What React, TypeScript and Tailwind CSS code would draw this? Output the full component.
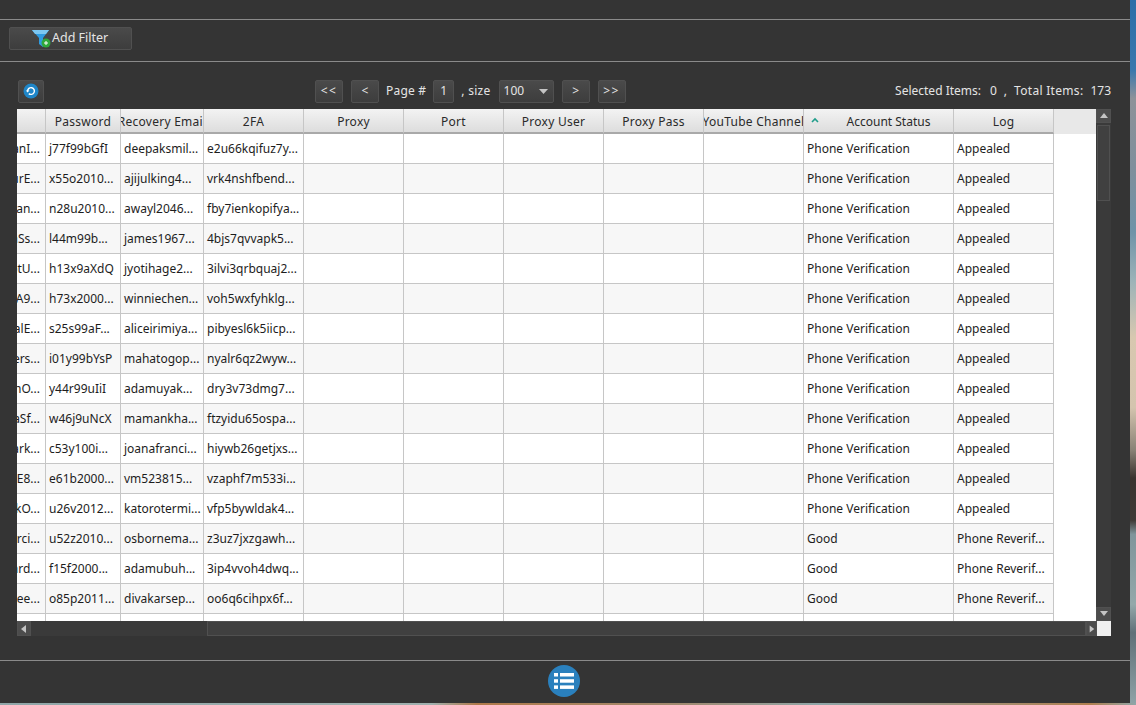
import React from "react";

const rows: string[][] = [
  ["anI...", "j77f99bGfI", "deepaksmil...", "e2u66kqifuz7y...", "Phone Verification", "Appealed"],
  ["urE...", "x55o2010...", "ajijulking4...", "vrk4nshfbend...", "Phone Verification", "Appealed"],
  ["lan...", "n28u2010...", "awayl2046...", "fby7ienkopifya...", "Phone Verification", "Appealed"],
  ["aSs...", "l44m99b...", "james1967...", "4bjs7qvvapk5...", "Phone Verification", "Appealed"],
  ["otU...", "h13x9aXdQ", "jyotihage2...", "3ilvi3qrbquaj2...", "Phone Verification", "Appealed"],
  ["aA9...", "h73x2000...", "winniechen...", "voh5wxfyhklg...", "Phone Verification", "Appealed"],
  ["alE...", "s25s99aF...", "aliceirimiya...", "pibyesl6k5iicp...", "Phone Verification", "Appealed"],
  ["ers...", "i01y99bYsP", "mahatogop...", "nyalr6qz2wyw...", "Phone Verification", "Appealed"],
  ["hO...", "y44r99uIiI", "adamuyak...", "dry3v73dmg7...", "Phone Verification", "Appealed"],
  ["aSf...", "w46j9uNcX", "mamankha...", "ftzyidu65ospa...", "Phone Verification", "Appealed"],
  ["ark...", "c53y100i...", "joanafranci...", "hiywb26getjxs...", "Phone Verification", "Appealed"],
  ["aE8...", "e61b2000...", "vm523815...", "vzaphf7m533i...", "Phone Verification", "Appealed"],
  ["kO...", "u26v2012...", "katorotermi...", "vfp5bywldak4...", "Phone Verification", "Appealed"],
  ["arci...", "u52z2010...", "osbornema...", "z3uz7jxzgawh...", "Good", "Phone Reverif..."],
  ["ard...", "f15f2000...", "adamubuh...", "3ip4vvoh4dwq...", "Good", "Phone Reverif..."],
  ["lee...", "o85p2011...", "divakarsep...", "oo6q6cihpx6f...", "Good", "Phone Reverif..."],
  ["", "", "", "", "", ""],
];

const headers = ["", "Password", "Recovery Email", "2FA", "Proxy", "Port", "Proxy User", "Proxy Pass", "YouTube Channel", "Account Status", "Log"];
const widths = ["w-[29px]", "w-[75px]", "w-[83px]", "w-[100px]", "w-[100px]", "w-[100px]", "w-[100px]", "w-[100px]", "w-[100px]", "w-[150px]", "w-[100px]"];

function Btn({ children, className = "" }: { children: React.ReactNode; className?: string }) {
  return (
    <div className={`flex h-[23px] shrink-0 items-center rounded-[2px] border border-[#505050] bg-gradient-to-b from-[#4a4a4a] to-[#3d3d3d] text-[#e4e4e4] ${className}`}>
      {children}
    </div>
  );
}

function Cell({ w, children, first }: { w: string; children?: React.ReactNode; first?: boolean }) {
  return (
    <div className={`${w} flex h-full shrink-0 items-center overflow-hidden whitespace-nowrap border-r border-[#c6c6c6] ${first ? "justify-end pr-[5px]" : "pl-[3px]"}`}>
      {children}
    </div>
  );
}

function Tri({ dir }: { dir: "up" | "down" | "left" | "right" }) {
  const pts = { up: "1,7 9,7 5,2", down: "1,2 9,2 5,7", left: "7,1 7,9 2,5", right: "3,1 3,9 8,5" }[dir];
  return (
    <svg width="10" height="10" viewBox="0 0 10 10">
      <polygon points={pts} fill="#c4c4c4" />
    </svg>
  );
}

export default function App() {
  return (
    <div className="flex h-[705px] w-[1136px] flex-col overflow-hidden bg-[linear-gradient(90deg,#8fa6a8_0%,#9fb0ae_38%,#b07a4a_42%,#a08a70_60%,#8fa6a8_72%,#b08050_96%,#8fa6a8_100%)] font-['Noto_Sans',sans-serif] text-[12px]">
      <div className="flex h-[703px] shrink-0">
        <div className="flex w-[1130px] shrink-0 flex-col bg-[#343434]">
          <div className="h-[20px] shrink-0 border-b border-[#8a8a8a]" />
          <div className="flex h-[42px] shrink-0 items-center border-b border-[#8a8a8a] pb-[4px] pl-[9px]">
            <Btn className="w-[123px] pl-[21px]">
              <svg width="22" height="20" viewBox="0 0 22 20" className="shrink-0">
                <polygon points="1,1 18,1 12,9 12,18 8,15 8,9" fill="#2f9be0" />
                <polygon points="1,1 18,1 15,5 4,5" fill="#7cc7f2" />
                <circle cx="15" cy="14" r="4.5" fill="#2fa83a" />
                <path d="M13 14h4M15 12v4" stroke="#fff" strokeWidth="1" />
              </svg>
              <span className="ml-[-1px] text-[12.5px]">Add Filter</span>
            </Btn>
          </div>
          <div className="flex h-[47px] shrink-0 items-center pl-[18px] pr-[19px] pt-[11px]">
            <Btn className="w-[26px] justify-center">
              <svg width="18" height="18" viewBox="0 0 18 18">
                <circle cx="9" cy="9" r="7.5" fill="#1f86c8" />
                <path d="M5.6 9a3.4 3.4 0 1 1 1.2 2.6" fill="none" stroke="#fff" strokeWidth="1.4" />
                <polygon points="3.8,8.4 7.4,8.4 5.6,10.6" fill="#fff" />
              </svg>
            </Btn>
            <div className="ml-[271px] flex items-center text-[#e4e4e4]">
              <Btn className="w-[28px] justify-center tracking-[1.5px]">&lt;&lt;</Btn>
              <Btn className="ml-[8px] w-[28px] justify-center">&lt;</Btn>
              <span className="ml-[7px] tracking-[0.2px]">Page #</span>
              <Btn className="ml-[7px] w-[21px] justify-center">1</Btn>
              <span className="ml-[7px] tracking-[0.3px]">, size</span>
              <Btn className="ml-[8px] w-[55px] justify-between pl-[4px] pr-[5px]">
                <span>100</span>
                <svg width="9" height="5" viewBox="0 0 9 5"><polygon points="0,0 9,0 4.5,5" fill="#c4c4c4" /></svg>
              </Btn>
              <Btn className="ml-[8px] w-[28px] justify-center">&gt;</Btn>
              <Btn className="ml-[8px] w-[28px] justify-center tracking-[1.5px]">&gt;&gt;</Btn>
            </div>
            <div className="ml-auto flex whitespace-nowrap text-[#e4e4e4]">
              <span>Selected Items:</span>
              <span className="ml-[9px]">0</span>
              <span className="ml-[7px]">,</span>
              <span className="ml-[7px] tracking-[0.3px]">Total Items:</span>
              <span className="ml-[7px]">173</span>
            </div>
          </div>
          <div className="ml-[17px] flex h-[527px] w-[1094px] shrink-0 flex-col">
            <div className="flex min-h-0 flex-1">
              <div className="min-w-0 flex-1 overflow-hidden bg-white text-[#1d1d1d]">
                <div className="flex h-[25px] bg-[#e8e8e8] text-[#2a2a2a]">
                  {headers.map((h, i) => (
                    <div key={i} className={`${widths[i]} relative flex h-full shrink-0 items-center justify-center overflow-hidden whitespace-nowrap border-b-2 border-r border-[#c6c6c6] border-b-[#a9a9a9] bg-gradient-to-b from-[#f3f3f3] to-[#dddddd] pt-[3px] ${h === "Account Status" ? "pl-[20px]" : "tracking-[0.25px]"}`}>
                      {h === "Account Status" && (
                        <svg width="8" height="6" viewBox="0 0 8 6" className="absolute left-[7px] top-[8px]">
                          <path d="M1 5l3-3 3 3" fill="none" stroke="#1f9d8a" strokeWidth="1.6" />
                        </svg>
                      )}
                      {h}
                    </div>
                  ))}
                </div>
                {rows.map((r, i) => (
                  <div key={i} className={`flex h-[30px] w-[1037px] border-b border-[#c6c6c6] ${i % 2 ? "bg-[#f7f7f7]" : "bg-white"}`}>
                    <Cell w={widths[0]} first>{r[0]}</Cell>
                    <Cell w={widths[1]}>{r[1]}</Cell>
                    <Cell w={widths[2]}>{r[2]}</Cell>
                    <Cell w={widths[3]}>{r[3]}</Cell>
                    <Cell w={widths[4]} />
                    <Cell w={widths[5]} />
                    <Cell w={widths[6]} />
                    <Cell w={widths[7]} />
                    <Cell w={widths[8]} />
                    <Cell w={widths[9]}>{r[4]}</Cell>
                    <Cell w={widths[10]}>{r[5]}</Cell>
                  </div>
                ))}
              </div>
              <div className="flex w-[15px] shrink-0 flex-col bg-[#3a3a3a]">
                <div className="flex h-[14px] items-center justify-center border border-[#505050] bg-[#4c4c4c]"><Tri dir="up" /></div>
                <div className="mx-px mt-[2px] h-[76px] border border-[#505050] bg-[#404040]" />
                <div className="flex-1" />
                <div className="flex h-[14px] items-center justify-center border border-[#505050] bg-[#4c4c4c]"><Tri dir="down" /></div>
              </div>
            </div>
            <div className="flex h-[15px] shrink-0 bg-[#3a3a3a]">
              <div className="flex w-[14px] items-center justify-center border border-[#505050] bg-[#4c4c4c]"><Tri dir="left" /></div>
              <div className="w-[176px]" />
              <div className="w-[879px] border border-[#505050] bg-[#404040]" />
              <div className="flex w-[11px] items-center justify-center border border-[#505050] bg-[#4c4c4c]"><Tri dir="right" /></div>
              <div className="flex-1 bg-[#f0f0f0]" />
            </div>
          </div>
          <div className="mt-[24px] flex h-[43px] shrink-0 items-center justify-center border-t border-[#8a8a8a] pb-[2px] pr-[3px]">
            <svg width="32" height="32" viewBox="0 0 32 32">
              <circle cx="16" cy="16" r="16" fill="#2a80bd" />
              <rect x="6" y="8" width="4" height="3.5" fill="#fff" />
              <rect x="12" y="8" width="14" height="3.5" fill="#fff" />
              <rect x="6" y="14.2" width="4" height="3.5" fill="#fff" />
              <rect x="12" y="14.2" width="14" height="3.5" fill="#fff" />
              <rect x="6" y="20.4" width="4" height="3.5" fill="#fff" />
              <rect x="12" y="20.4" width="14" height="3.5" fill="#fff" />
            </svg>
          </div>
        </div>
        <div className="flex-1 bg-[linear-gradient(180deg,#2c6ea8_0%,#3a78ad_10%,#8d9299_14%,#7f8f9c_24%,#6f93a8_33%,#9db3b8_40%,#d8c8b0_48%,#d4c4ae_58%,#8a8276_64%,#3a332e_68%,#3f3a36_74%,#7f959b_76%,#94a8aa_86%,#5f7078_90%,#8ea2a6_100%)]" />
      </div>
    </div>
  );
}
